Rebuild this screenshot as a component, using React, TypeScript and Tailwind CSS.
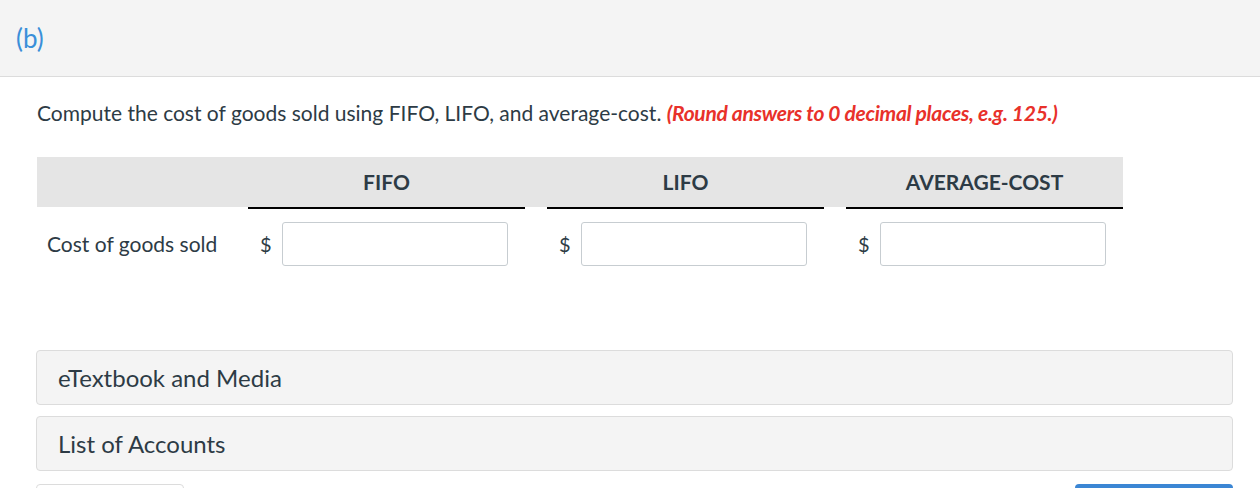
import React from "react";

const columns = ["FIFO", "LIFO", "AVERAGE-COST"];

function AmountCell() {
  return (
    <div className="flex w-[299px] shrink-0 items-center pl-[12px]">
      <span className="w-[22px] text-[20px] text-[#2d3b45]">$</span>
      <input
        type="text"
        className="h-[44px] w-[226px] rounded-[3px] border border-[#c7cdd1] bg-white px-2 text-[18px] outline-none"
      />
    </div>
  );
}

export default function App() {
  return (
    <div className="min-h-[488px] bg-white font-['Lato','Liberation_Sans',sans-serif] text-[#2d3b45]">
      {/* Part header */}
      <div className="flex h-[77px] items-center border-b border-[#dcdcdc] bg-[#f4f4f4] pl-[16px]">
        <span className="text-[26px] leading-none text-[#3a8fd9]">(b)</span>
      </div>

      <div className="pl-[37px] pr-[27px]">
        <p className="mt-[22px] text-[21px] leading-[28px]">
          Compute the cost of goods sold using FIFO, LIFO, and average-cost.{" "}
          <span className="font-bold italic tracking-[-0.3px] text-[#e8312a]">
            (Round answers to 0 decimal places, e.g. 125.)
          </span>
        </p>

        {/* Answer table */}
        <div className="mt-[30px] w-[1086px]">
          <div className="flex h-[50px] bg-[#e5e5e5]">
            <div className="w-[211px] shrink-0" />
            {columns.map((c, i) => (
              <div
                key={c}
                className={`flex w-[277px] shrink-0 items-center justify-center text-[21px] font-bold ${i < 2 ? "mr-[22px]" : ""}`}
              >
                {c}
              </div>
            ))}
          </div>
          <div className="flex h-[2px]">
            <div className="w-[211px] shrink-0" />
            <div className="mr-[22px] w-[277px] shrink-0 bg-black" />
            <div className="mr-[22px] w-[277px] shrink-0 bg-black" />
            <div className="w-[277px] shrink-0 bg-black" />
          </div>
          <div className="mt-[13px] flex items-center">
            <div className="w-[211px] shrink-0 pl-[10px] text-[21px]">Cost of goods sold</div>
            <AmountCell />
            <AmountCell />
            <AmountCell />
          </div>
        </div>

        {/* Resources */}
        <div className="-ml-px mt-[84px] flex flex-col gap-[11px]">
          <div className="flex h-[55px] items-center rounded-[4px] border border-[#dcdcdc] bg-[#f4f4f4] pl-[21px] text-[24px]">
            eTextbook and Media
          </div>
          <div className="flex h-[55px] items-center rounded-[4px] border border-[#dcdcdc] bg-[#f4f4f4] pl-[21px] text-[24px]">
            List of Accounts
          </div>
          <div className="flex items-start justify-between pt-[2px]">
            <div className="h-[40px] w-[148px] rounded-[4px] border border-[#dcdcdc] bg-white" />
            <div className="h-[40px] w-[158px] rounded-[4px] bg-[#3b86d4]" />
          </div>
        </div>
      </div>
    </div>
  );
}
